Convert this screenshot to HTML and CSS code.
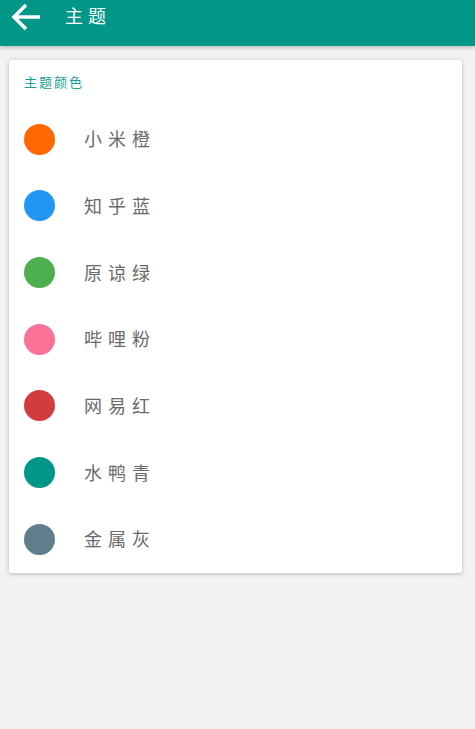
FILE: index.html
```html
<!DOCTYPE html>
<html lang="zh">
<head>
    <meta charset="UTF-8">
    <meta name="viewport" content="width=device-width, initial-scale=1.0">
    <title>主题</title>
    <link rel="stylesheet" href="styles.css">
</head>
<body>
<div class="toolbar">
    <svg class="toolbar-back" width="40" height="34" viewBox="0 0 40 34">
        <path d="M41 16H14 M26 4L14 16L26 28" fill="none" stroke="#ffffff" stroke-width="3.6" stroke-linecap="butt" stroke-linejoin="miter"/>
    </svg>
    <div class="toolbar-title">主题</div>
</div>
<div class="page">
    <div class="card">
        <div class="card-title">主题颜色</div>
        <div class="theme-item"><span class="dot c-orange"></span><span class="theme-name">小米橙</span></div>
        <div class="theme-item"><span class="dot c-blue"></span><span class="theme-name">知乎蓝</span></div>
        <div class="theme-item"><span class="dot c-green"></span><span class="theme-name">原谅绿</span></div>
        <div class="theme-item"><span class="dot c-pink"></span><span class="theme-name">哔哩粉</span></div>
        <div class="theme-item"><span class="dot c-red"></span><span class="theme-name">网易红</span></div>
        <div class="theme-item"><span class="dot c-teal"></span><span class="theme-name">水鸭青</span></div>
        <div class="theme-item"><span class="dot c-grey"></span><span class="theme-name">金属灰</span></div>
    </div>
</div>
</body>
</html>
```

FILE: styles.css
```css
html,
body {
    margin: 0;
    padding: 0;
    height: 100%;
}
body {
    background-color: #f2f2f2;
    font-family: "Noto Sans CJK SC", "Noto Sans", sans-serif;
}
.toolbar {
    height: 46px;
    display: flex;
    align-items: flex-start;
    background-color: #009688;
    box-shadow: 0 2px 4px rgba(0, 0, 0, .22);
    position: relative;
}
.toolbar-back {
    display: block;
    width: 40px;
    height: 34px;
    margin-top: 1px;
}
.toolbar-title {
    margin-left: 25px;
    margin-top: 3px;
    color: #ffffff;
    font-size: 18px;
    line-height: 24px;
    letter-spacing: 5px;
}
.page {
    padding: 14px 13px 0 9px;
}
.card {
    background-color: #ffffff;
    border-radius: 3px;
    box-shadow: 0 1px 4px rgba(0, 0, 0, .25);
}
.card-title {
    height: 46px;
    box-sizing: border-box;
    padding: 14px 0 0 15px;
    color: #17a092;
    font-size: 13px;
    line-height: 16px;
    letter-spacing: 2px;
}
.theme-item {
    height: 66.66px;
    display: flex;
    align-items: center;
    padding-left: 15px;
}
.dot {
    width: 31px;
    height: 31px;
    border-radius: 50%;
    flex-shrink: 0;
}
.theme-name {
    margin-left: 29px;
    margin-top: -2px;
    color: #6a6a6a;
    font-size: 18px;
    line-height: 24px;
    letter-spacing: 6px;
}
.c-orange {
    background-color: #ff6700;
}
.c-blue {
    background-color: #2196f3;
}
.c-green {
    background-color: #4caf50;
}
.c-pink {
    background-color: #fb7299;
}
.c-red {
    background-color: #d13d3f;
}
.c-teal {
    background-color: #009688;
}
.c-grey {
    background-color: #607d8b;
}
```
